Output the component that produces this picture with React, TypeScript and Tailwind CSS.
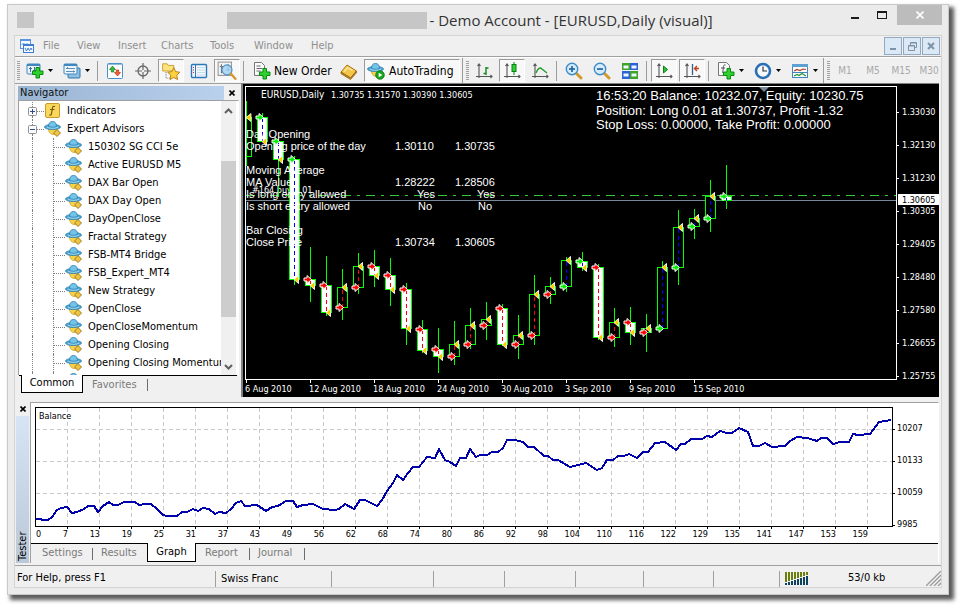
import type { ReactNode } from "react"
import { clsx } from "clsx"

type Candle = {
  x: number
  high: number
  top: number
  bottom: number
  low: number
  bull: boolean
  long: boolean
}

// [x, high, body top, body bottom, low, bullish, long position]
const rawCandles: [number, number, number, number, number, 0 | 1, 0 | 1][] = [
  [262, 113, 117, 141, 141, 0, 1],
  [278, 137, 141, 159, 197, 0, 1],
  [294, 156, 159, 279, 285, 0, 1],
  [310, 247, 279, 285, 302, 0, 0],
  [326, 256, 285, 312, 316, 0, 0],
  [342, 269, 287, 307, 320, 1, 0],
  [358, 253, 266, 287, 294, 1, 0],
  [374, 250, 266, 275, 287, 0, 0],
  [390, 258, 275, 289, 306, 0, 0],
  [406, 283, 289, 328, 345, 0, 0],
  [422, 320, 329, 350, 353, 0, 0],
  [438, 328, 349, 356, 373, 0, 0],
  [454, 321, 344, 356, 365, 1, 0],
  [470, 308, 325, 344, 349, 1, 0],
  [486, 302, 319, 325, 340, 1, 0],
  [502, 304, 308, 344, 346, 0, 0],
  [518, 315, 335, 344, 359, 1, 0],
  [534, 275, 294, 335, 345, 1, 0],
  [550, 277, 286, 294, 304, 1, 0],
  [566, 257, 260, 286, 292, 1, 1],
  [582, 252, 261, 267, 271, 0, 1],
  [598, 264, 267, 337, 340, 0, 0],
  [614, 308, 322, 337, 347, 1, 0],
  [630, 307, 322, 332, 345, 0, 0],
  [646, 314, 328, 332, 352, 1, 0],
  [662, 261, 267, 328, 330, 1, 1],
  [678, 210, 227, 267, 285, 1, 1],
  [694, 209, 218, 226, 239, 1, 1],
  [710, 180, 196, 218, 232, 1, 1],
  [726, 165, 196, 200, 209, 0, 1],
]

const candles: Candle[] = rawCandles.map(([x, high, top, bottom, low, bull, long]) => ({
  x,
  high,
  top,
  bottom,
  low,
  bull: bull === 1,
  long: long === 1,
}))

const prices = ["1.33030", "1.32130", "1.31230", "1.30305", "1.29405", "1.28480", "1.27580", "1.26655", "1.25755"]
const dates = [
  "6 Aug 2010",
  "12 Aug 2010",
  "18 Aug 2010",
  "24 Aug 2010",
  "30 Aug 2010",
  "3 Sep 2010",
  "9 Sep 2010",
  "15 Sep 2010",
]

const indicatorRows: { y: number; label: string; a?: string; b?: string; inset?: number }[] = [
  { y: 138, label: "Day Opening" },
  { y: 150, label: "Opening price of the day", a: "1.30110", b: "1.30735" },
  { y: 174, label: "Moving Average" },
  { y: 186, label: "MA Value", a: "1.28222", b: "1.28506" },
  { y: 198, label: "Is long entry allowed", a: "Yes", b: "Yes", inset: 22 },
  { y: 210, label: "Is short entry allowed", a: "No", b: "No", inset: 23 },
  { y: 234, label: "Bar Closing" },
  { y: 246, label: "Close Price", a: "1.30734", b: "1.30605" },
]

const balancePoints =
  "36,519 41,519 42,520 48,520 52,517 57,510 61,508 67,507 72,513 77,512 84,509 88,506 94,506 98,512 103,506 109,502 113,505 118,505 124,502 135,502 139,505 145,504 151,504 157,509 163,515 167,516 177,516 182,512 187,512 193,509 198,511 203,508 209,509 215,514 219,512 226,513 231,509 236,503 241,501 245,506 257,505 266,511 272,507 278,506 286,501 293,501 297,507 303,505 313,504 323,509 335,510 339,509 345,504 354,509 360,500 365,500 377,506 382,500 387,491 393,483 397,475 403,480 408,473 413,467 419,467 427,457 435,458 439,449 445,460 450,462 456,466 460,458 466,458 470,449 476,457 480,455 487,455 492,452 498,452 503,448 507,440 515,440 523,442 528,447 534,447 544,456 548,456 553,460 558,460 570,467 578,465 586,463 597,470 602,468 607,460 613,460 618,456 624,456 629,454 637,458 643,452 648,452 655,443 665,442 676,450 681,444 685,444 691,439 702,439 707,436 712,437 720,431 727,433 732,433 739,428 748,432 753,446 759,446 765,443 772,447 785,446 790,441 797,437 807,438 817,441 821,438 827,438 833,444 840,442 849,442 853,434 858,435 870,434 879,422 891,420"

const tradeLabels = [
  "7", "13", "19", "25", "31", "37", "43", "49", "56", "62", "68", "74", "80",
  "86", "92", "98", "104", "110", "116", "122", "129", "135", "141", "147", "153", "159",
]

const menus = [
  { label: "File", width: "w-[34px]" },
  { label: "View", width: "w-[41px]" },
  { label: "Insert", width: "w-[43px]" },
  { label: "Charts", width: "w-[49px]" },
  { label: "Tools", width: "w-[44px]" },
  { label: "Window", width: "w-[57px]" },
  { label: "Help", width: "w-[40px]" },
]

const experts = [
  "150302 SG CCI 5e",
  "Active EURUSD M5",
  "DAX Bar Open",
  "DAX Day Open",
  "DayOpenClose",
  "Fractal Strategy",
  "FSB-MT4 Bridge",
  "FSB_Expert_MT4",
  "New Strategy",
  "OpenClose",
  "OpenCloseMomentum",
  "Opening Closing",
  "Opening Closing Momentum",
]

/* ---------- icons ---------- */

function Icon({ children, size = 18 }: { children: ReactNode; size?: number }) {
  return (
    <svg width={size} height={size} viewBox="0 0 18 18" fill="none" className="shrink-0" aria-hidden="true">
      {children}
    </svg>
  )
}

function Plus({ x, y }: { x: number; y: number }) {
  return (
    <path
      transform={`translate(${x} ${y})`}
      d="M4 .5h3.500v3.500h3.500v3.500h-3.500v3.500h-3.500v-3.500h-3.500v-3.500h3.500z"
      fill="#2fd12f"
      stroke="#0d8a12"
    />
  )
}

function NewChartIcon() {
  return (
    <Icon>
      <rect x="1" y="2" width="13" height="10" rx="1" fill="#eaf4fc" stroke="#3f87bd" />
      <path d="M1 3h13" stroke="#3f87bd" strokeWidth="2" />
      <path d="M4.500 5v5M3 6.500h3M8.500 5v5M7 8.500h3" stroke="#3a6f9c" />
      <Plus x={6} y={5} />
    </Icon>
  )
}

function ProfilesIcon() {
  return (
    <Icon>
      <rect x="5" y="6" width="12" height="10" rx="1" fill="#8fc0e4" stroke="#2f74ab" />
      <rect x="1" y="2" width="13" height="10" rx="1" fill="#eef6fc" stroke="#3f87bd" />
      <path d="M1 3h13" stroke="#3f87bd" strokeWidth="2" />
      <path d="M3 6.500h9M3 9.500h9M4.500 5v2M10.500 8.500v2" stroke="#5c8fb8" />
    </Icon>
  )
}

function MarketWatchIcon() {
  return (
    <Icon>
      <rect x="1.500" y="1.500" width="15" height="15" rx="1" fill="#fdfdfd" stroke="#4a90c8" />
      <path d="M2 2.500h14" stroke="#8fbce0" />
      <path d="M6.500 4l3 3.500h-1.800v2.500H5.300V7.500H3.500z" fill="#35b83a" stroke="#15801b" strokeWidth=".7" />
      <path d="M11.500 14l-3-3.500h1.800V8h2.400v2.500h1.800z" fill="#f0623a" stroke="#b6300f" strokeWidth=".7" />
    </Icon>
  )
}

function CrosshairIcon() {
  return (
    <Icon>
      <circle cx="9" cy="9" r="5" stroke="#666" strokeWidth="1.300" />
      <path d="M9 1v7M9 10v7M1 9h7M10 9h7" stroke="#666" strokeWidth="1.200" />
    </Icon>
  )
}

function NavigatorIcon() {
  return (
    <Icon size={20}>
      <path d="M1.500 2.500h4l1 1.500h5v5h-10z" fill="#fbe47c" stroke="#c79a2a" strokeWidth=".8" />
      <path d="M4.500 10v6M5 15.500h4" stroke="#888" strokeDasharray="1 1" />
      <path
        d="M11.500 6l1.700 3.600 3.800.5-2.800 2.700.7 3.900-3.400-1.900-3.400 1.900.7-3.900L6 10.100l3.800-.5z"
        fill="#fbd13e"
        stroke="#b9821c"
        strokeWidth=".9"
      />
    </Icon>
  )
}

function DataWindowIcon() {
  return (
    <Icon>
      <rect x="1.500" y="2.500" width="15" height="13" rx="1" fill="#f3f9fe" stroke="#2f78b7" strokeWidth="1.400" />
      <path d="M5.500 3v12" stroke="#2f78b7" />
      <path d="M3 5.500h1M3 8h1M3 10.500h1" stroke="#d03030" />
      <path d="M7 5.500h8M7 8h8M7 10.500h8M7 13h8" stroke="#c4dcef" />
    </Icon>
  )
}

function TesterIcon() {
  return (
    <Icon size={20}>
      <rect x="1" y="1" width="12" height="12" fill="#f4f4f4" stroke="#999" />
      <path d="M4 3v8M2.500 5h3M10 3v6M8.500 8h3" stroke="#777" />
      <circle cx="9" cy="8" r="4.500" fill="#9fd0f2" fillOpacity=".8" stroke="#4b92c6" />
      <path d="M12.500 11.500l4 4.500" stroke="#d3992c" strokeWidth="2.200" strokeLinecap="round" />
    </Icon>
  )
}

function NewOrderIcon() {
  return (
    <Icon>
      <path d="M1.500.5h7l3 3v10h-10z" fill="#fafafa" stroke="#777" />
      <path d="M3.500 4h4M3.500 6.500h6M3.500 9h4" stroke="#666" />
      <Plus x={6} y={6} />
    </Icon>
  )
}

function MetaEditorIcon() {
  return (
    <Icon>
      <path d="M1 10l6-7 9.500 6-6 7z" fill="#f3c64b" stroke="#a9731a" />
      <path d="M1 10v1.700l9.500 5.800 6-6.800V9l-6 7z" fill="#c98e24" stroke="#93610f" strokeWidth=".8" />
      <path d="M4 9.500l3.500-4 5 3" stroke="#fdeba6" strokeWidth="1.300" />
    </Icon>
  )
}

function ExpertIcon({ play = false }: { play?: boolean }) {
  return (
    <Icon>
      <path d="M4.500 8.500c0 3.500 2 6 5 6s4-3 4-6z" fill="#f7d54a" stroke="#c39a25" strokeWidth=".8" />
      <ellipse cx="8.500" cy="7" rx="8" ry="2.600" fill="#4fa9d8" stroke="#2a7cab" strokeWidth=".8" />
      <path d="M4.500 6.500c0-3.500 1.600-5 4-5s4 1.500 4 5c-2 1-6 1-8 0z" fill="#74c3e8" stroke="#2a7cab" strokeWidth=".8" />
      <path d="M3 7.200c3 1.500 8 1.500 11 0" stroke="#b9e3f6" strokeWidth=".8" />
      {play ? (
        <>
          <circle cx="13" cy="13" r="4.300" fill="#17a51c" stroke="#0b7c10" strokeWidth=".8" />
          <path d="M11.700 10.700v4.600l3.700-2.300z" fill="#fff" />
        </>
      ) : (
        <path d="M13 9.500l3.500 3.500-3.500 3.500-3.500-3.500z" fill="#f0c443" stroke="#96701a" strokeWidth=".9" />
      )}
    </Icon>
  )
}

function IndicatorsIcon() {
  return (
    <Icon>
      <rect x="1.500" y="1.500" width="14" height="14" rx="1.500" fill="#f8d75a" stroke="#c79a2a" />
      <path d="M11 4.500c-2-.8-2.400.6-2.700 2.500L7.400 12c-.2 1-.8 1.300-1.900.9M6 7.500h4.500" stroke="#7a5510" strokeWidth="1.200" />
    </Icon>
  )
}

function Axes() {
  return <path d="M4 2v14M1 14.500h16M2.500 4L4 2l1.500 2M15.500 13l1.500 1.500-1.500 1.500" stroke="#555" strokeWidth="1.100" />
}

function BarsIcon() {
  return (
    <Icon>
      <Axes />
      <path d="M11 5v8M11 6h2.500M8.500 11.500H11" stroke="#128a1a" strokeWidth="1.400" />
    </Icon>
  )
}

function CandlesIcon() {
  return (
    <Icon>
      <Axes />
      <path d="M11 0v13" stroke="#0a7f12" />
      <rect x="9" y="2.500" width="4" height="7" fill="#2fcf38" stroke="#0a7f12" />
    </Icon>
  )
}

function LineIcon() {
  return (
    <Icon>
      <Axes />
      <path d="M5 11c2-5 4-6 6-4l5 4" stroke="#1c9a24" strokeWidth="1.300" />
    </Icon>
  )
}

function ZoomIcon({ plus = false }: { plus?: boolean }) {
  return (
    <Icon>
      <path d="M11 11l5 5" stroke="#d29a2c" strokeWidth="3" strokeLinecap="round" />
      <circle cx="7" cy="7" r="5.700" fill="#d6ecfb" stroke="#3d8dc8" strokeWidth="1.400" />
      <path d="M4 7h6" stroke="#2467a3" strokeWidth="1.700" />
      {plus && <path d="M7 4v6" stroke="#2467a3" strokeWidth="1.700" />}
    </Icon>
  )
}

function TileIcon() {
  return (
    <Icon>
      <path d="M1 1h8v7H1zM9 9h8v8H9z" fill="#3da52b" />
      <path d="M9 1h8v7H9zM1 9h8v8H1z" fill="#2c62d6" />
      <path d="M2.500 3.500h5v3h-5zM10.500 3.500h5v3h-5zM2.500 11.500h5v3h-5zM10.500 11.500h5v3h-5z" fill="#eef6ff" />
    </Icon>
  )
}

function AutoScrollIcon() {
  return (
    <Icon>
      <Axes />
      <path d="M8.500 4v7l4-3.500z" fill="#2bc234" stroke="#0d8316" />
    </Icon>
  )
}

function ShiftIcon() {
  return (
    <Icon>
      <Axes />
      <path d="M9.500 2v11" stroke="#2c5f92" strokeWidth="1.300" />
      <path d="M16 6.500h-4M14 4l-2.500 2.500L14 9" stroke="#c2411b" strokeWidth="1.400" />
    </Icon>
  )
}

function AddIndicatorIcon() {
  return (
    <Icon>
      <path d="M1.500.5h8l3 3v10h-11z" fill="#fafafa" stroke="#777" />
      <path d="M8.500 3c-2-.5-2 1-2.200 3l-.6 5M4 6h4" stroke="#555" />
      <Plus x={6} y={6} />
    </Icon>
  )
}

function ClockIcon() {
  return (
    <Icon>
      <circle cx="9" cy="9" r="7" fill="#f4f9fd" stroke="#2a6fb5" strokeWidth="2.600" />
      <path d="M9 4.500V9h4" stroke="#333" strokeWidth="1.200" />
    </Icon>
  )
}

function TemplateIcon() {
  return (
    <Icon>
      <rect x="1.500" y="2.500" width="15" height="13" fill="#fbfdff" stroke="#3f87bd" />
      <path d="M1 3.500h16" stroke="#5ea0d4" strokeWidth="3" />
      <path d="M3 9l3-1.500 3 1 3-1.500 3 .5" stroke="#b23a1e" strokeWidth="1.200" />
      <path d="M2 10.500h14" stroke="#3f87bd" />
      <path d="M3 14l3-1.500 2 1 3-2 4 2.500" stroke="#25962c" strokeWidth="1.200" />
    </Icon>
  )
}

function Caret() {
  return (
    <svg width="5" height="3" viewBox="0 0 5 3" className="shrink-0" aria-hidden="true">
      <path d="M0 0h5L2.500 3z" fill="#000" />
    </svg>
  )
}

/* ---------- toolbar ---------- */

const pressedStyle = "border border-t-[#9a9a9a] border-l-[#9a9a9a] border-r-white border-b-white bg-[#f8f8f8]"

function Tool({ label, pressed, children }: { label: string; pressed?: boolean; children: ReactNode }) {
  return (
    <button
      type="button"
      aria-label={label}
      aria-pressed={pressed}
      className={clsx("mx-px flex h-[23px] w-[26px] shrink-0 items-center justify-center", pressed && pressedStyle)}
    >
      {children}
    </button>
  )
}

function MenuTool({ label, children }: { label: string; children: ReactNode }) {
  return (
    <button type="button" aria-label={label} className="flex h-[23px] w-[37px] shrink-0 items-center justify-center gap-1">
      {children}
      <Caret />
    </button>
  )
}

function Separator() {
  return <span className="mr-[3px] ml-0.5 h-5 w-px shrink-0 bg-[#9c9c9c]" />
}

function Grip() {
  return (
    <span className="mr-px ml-0.5 h-5 w-[3px] shrink-0 bg-[repeating-linear-gradient(to_bottom,#a0a0a0_0_1px,transparent_1px_2px)]" />
  )
}

function Toolbar() {
  return (
    <div className="flex h-[26px] items-center overflow-hidden border-t border-white bg-[#f0f0f0] text-[12px]">
      <Grip />
      <MenuTool label="New chart"><NewChartIcon /></MenuTool>
      <MenuTool label="Profiles"><ProfilesIcon /></MenuTool>
      <Separator />
      <Tool label="Market Watch"><MarketWatchIcon /></Tool>
      <Tool label="Crosshair"><CrosshairIcon /></Tool>
      <Tool label="Navigator" pressed><NavigatorIcon /></Tool>
      <Tool label="Data Window"><DataWindowIcon /></Tool>
      <Tool label="Strategy Tester" pressed><TesterIcon /></Tool>
      <Separator />
      <button type="button" className="flex h-[23px] w-[88px] shrink-0 items-center gap-[3px] pl-1.5 whitespace-nowrap">
        <NewOrderIcon />
        New Order
      </button>
      <Tool label="MetaEditor"><MetaEditorIcon /></Tool>
      <button
        type="button"
        aria-pressed="true"
        className={clsx("ml-px flex h-[23px] w-[96px] shrink-0 items-center gap-1 pl-0.5 whitespace-nowrap", pressedStyle)}
      >
        <ExpertIcon play />
        AutoTrading
      </button>
      <span className="mr-px ml-0.5 h-full w-px shrink-0 bg-[#9c9c9c]" />
      <Grip />
      <Tool label="Bar chart"><BarsIcon /></Tool>
      <Tool label="Candlesticks" pressed><CandlesIcon /></Tool>
      <Tool label="Line chart"><LineIcon /></Tool>
      <Separator />
      <Tool label="Zoom in"><ZoomIcon plus /></Tool>
      <Tool label="Zoom out"><ZoomIcon /></Tool>
      <Tool label="Tile windows"><TileIcon /></Tool>
      <Separator />
      <Tool label="Auto scroll" pressed><AutoScrollIcon /></Tool>
      <Tool label="Chart shift" pressed><ShiftIcon /></Tool>
      <Separator />
      <MenuTool label="Indicators list"><AddIndicatorIcon /></MenuTool>
      <MenuTool label="Periods"><ClockIcon /></MenuTool>
      <MenuTool label="Templates"><TemplateIcon /></MenuTool>
      <span className="mr-px h-full w-px shrink-0 bg-[#9c9c9c]" />
      <Grip />
      {["M1", "M5", "M15", "M30"].map((period) => (
        <button key={period} type="button" disabled className="w-7 shrink-0 text-[10px] text-[#a8a8a8]">
          {period}
        </button>
      ))}
    </div>
  )
}

/* ---------- title and menu ---------- */

function TitleBar() {
  return (
    <header className="flex h-[30px] items-start">
      <span className="mt-[7px] ml-[9px] h-4 w-[17px] bg-[#c6c6c6]" />
      <span className="flex-[3]" />
      <span className="mt-[7px] h-[17px] w-[200px] bg-[#c6c6c6]" />
      <h1 className="ml-[3px] font-['Open_Sans',sans-serif] text-[15px] leading-[30px] whitespace-nowrap text-[#333]">
        - Demo Account - [EURUSD,Daily (visual)]
      </h1>
      <span className="flex-[2]" />
      <div className="flex items-start">
        <button type="button" aria-label="Minimize" className="h-5 w-7 pt-1.5 pl-2.5">
          <span className="block h-0.5 w-2 bg-[#1a1a1a]" />
        </button>
        <button type="button" aria-label="Maximize" className="h-5 w-7 pl-2">
          <span className="block h-2 w-2.5 border border-t-2 border-[#1a1a1a]" />
        </button>
        <button
          type="button"
          aria-label="Close"
          className="mr-1.5 flex h-5 w-[45px] items-center justify-center bg-[#bcbcbc]"
        >
          <svg width="8" height="8" viewBox="0 0 8 8" stroke="#fff" strokeWidth="1.600">
            <path d="M.5.5l7 7M7.500.5l-7 7" />
          </svg>
        </button>
      </div>
    </header>
  )
}

function MenuBar() {
  const box = "flex h-[18px] w-[18px] items-center justify-center border border-[#93a9bf] bg-[#dbe8f5]"
  return (
    <nav className="flex h-[21px] items-center border-b border-[#a0a0a0] bg-[#f0f0f0] text-[11px] text-[#8f8f8f]">
      <svg width="14" height="14" viewBox="0 0 14 14" fill="none" className="mr-[9px] ml-[5px]" aria-hidden="true">
        <rect x=".5" y=".5" width="10" height="9" fill="#f4f9ff" stroke="#5b95e0" />
        <path d="M0 1.500h11" stroke="#5b95e0" />
        <path d="M1.500 6l2-2 2 2 2-2" stroke="#5b95e0" />
        <rect x="3.500" y="5.500" width="10" height="8" fill="#f4f9ff" stroke="#3f7dd0" />
        <path d="M3 6.500h11M5 9l1.500 3L8 9l1.500 2.500L11 9l1 2" stroke="#3f7dd0" />
      </svg>
      {menus.map((menu) => (
        <button key={menu.label} type="button" className={clsx("text-left", menu.width)}>
          {menu.label}
        </button>
      ))}
      <div className="mr-px ml-auto flex gap-px">
        <button type="button" aria-label="Minimize chart" className={box}>
          <span className="mt-1.5 block h-0.5 w-1.5 bg-[#7f93a8]" />
        </button>
        <button type="button" aria-label="Restore chart" className={box}>
          <svg width="9" height="9" viewBox="0 0 9 9" fill="none" stroke="#7f93a8">
            <path d="M2.500 3V.5h6v5H6.500M2 1h7M.5 3.500h6v5h-6zM0 4h7" />
          </svg>
        </button>
        <button type="button" aria-label="Close chart" className={box}>
          <svg width="8" height="8" viewBox="0 0 8 8" stroke="#7f93a8" strokeWidth="2">
            <path d="M1 1l6 6M7 1L1 7" />
          </svg>
        </button>
      </div>
    </nav>
  )
}

/* ---------- navigator ---------- */

function SmallClose() {
  return (
    <svg width="6" height="6" viewBox="0 0 6 6" stroke="#000" strokeWidth="1.600" aria-hidden="true">
      <path d="M.5.5l5 5M5.500.5l-5 5" />
    </svg>
  )
}

function RootRow({ label, open, children }: { label: string; open?: boolean; children: ReactNode }) {
  return (
    <div className="flex h-[18px] items-center">
      <button
        type="button"
        aria-label={`Toggle ${label}`}
        className="ml-[9px] flex h-full w-[9px] shrink-0 flex-col items-center"
      >
        <span className="w-px flex-1 border-l border-dotted border-[#808080]" />
        <svg width="9" height="9" viewBox="0 0 9 9" fill="none">
          <rect x=".5" y=".5" width="8" height="8" rx="1" fill="#fafafa" stroke="#919191" />
          <path d={open ? "M2 4.500h5" : "M2 4.500h5M4.500 2v5"} stroke="#2f4c9b" />
        </svg>
        <span className="w-px flex-1 border-l border-dotted border-[#808080]" />
      </button>
      <span className="w-[7px] border-t border-dotted border-[#808080]" />
      {children}
      <span className="ml-[5px]">{label}</span>
    </div>
  )
}

function ExpertRow({ label }: { label: string }) {
  return (
    <li className="flex h-[18px] items-center whitespace-nowrap">
      <span className="ml-[13px] h-full w-[21px] shrink-0 border-l border-dotted border-[#808080]" />
      <span className="h-full w-3 shrink-0 border-l border-dotted border-[#808080]">
        <span className="block h-2.5 border-b border-dotted border-[#808080]" />
      </span>
      <ExpertIcon />
      <span className="ml-[5px]">{label}</span>
    </li>
  )
}

function Navigator() {
  return (
    <aside className="w-[226px] shrink-0 border-t border-[#a0a0a0] pt-0.5 pl-[3px] text-[11px]">
      <div className="flex h-[14px] items-center">
        <h2 className="h-[14px] w-[206px] bg-linear-to-r from-[#99b4d1] to-[#bad1ed] pl-0.5 leading-[13px] text-[#111]">Navigator</h2>
        <button type="button" aria-label="Close navigator" className="ml-[5px]">
          <SmallClose />
        </button>
      </div>
      <div className="flex h-[275px] w-[221px] border border-b-0 border-[#a0a0a0] border-r-white bg-white">
        <div className="min-w-0 flex-1 overflow-hidden pt-px">
          <RootRow label="Indicators"><IndicatorsIcon /></RootRow>
          <RootRow label="Expert Advisors" open><ExpertIcon /></RootRow>
          <ul>
            {experts.map((name) => (
              <ExpertRow key={name} label={name} />
            ))}
            <ExpertRow label="" />
          </ul>
        </div>
        <div className="mr-0.5 flex w-[15px] shrink-0 flex-col items-center bg-[#f0f0f0]">
          <svg width="9" height="6" viewBox="0 0 9 6" fill="none" stroke="#606060" strokeWidth="2" className="mt-[7px]">
            <path d="M1 5l3.500-3.500L8 5" />
          </svg>
          <div className="mt-[47px] h-[156px] w-full bg-[#cdcdcd]" />
          <svg width="9" height="6" viewBox="0 0 9 6" fill="none" stroke="#606060" strokeWidth="2" className="mt-auto mb-[5px]">
            <path d="M1 1l3.500 3.500L8 1" />
          </svg>
        </div>
      </div>
      <div className="ml-px flex h-[21px] w-[218px] items-start border-t border-black pl-0.5">
        <button type="button" className="-mt-px h-[18px] w-[62px] border border-t-0 border-black bg-white">
          Common
        </button>
        <button type="button" className="ml-[9px] h-[18px] text-[#7a7a7a]">
          Favorites
        </button>
        <span className="mt-[3px] ml-[10px] h-3 w-px bg-[#6d6d6d]" />
      </div>
    </aside>
  )
}

/* ---------- price chart ---------- */

function CandleShape({ candle }: { candle: Candle }) {
  const { x, high, top, bottom, low, bull, long } = candle
  const openY = (bull ? bottom : top) + 0.5
  const closeY = (bull ? top : bottom) + 0.5
  return (
    <g>
      <g shapeRendering="crispEdges">
        <rect x={x} y={high} width="1" height={low - high} fill="#00ff00" />
        <rect x={x - 5} y={top} width="11" height={bottom - top + 1} fill="#00ff00" />
        <rect x={x - 4} y={top + 1} width="9" height={bottom - top - 1} fill={bull ? "#000" : "#fff"} />
        <path d={`M${x + 0.5} ${openY}V${closeY}`} stroke={long ? "#0000ff" : "#ff0000"} strokeDasharray="4 3" />
      </g>
      {x !== 726 && (
        <path d={`M${x} ${closeY}l4.500-4v8z`} fill="#ffcc00" stroke="#fff" strokeWidth=".9" />
      )}
      <path
        d={`M${x - 6} ${openY - 1.5}h3v-2.500l4.500 4-4.500 4v-2.500h-3z`}
        fill={long ? "#00f000" : "#ff0000"}
        stroke="#fff"
        strokeWidth="1"
      />
    </g>
  )
}

function PriceChart() {
  return (
    <main className="mr-0.5 min-w-0 flex-1 border-t border-l-2 border-[#808080] bg-black">
      <svg viewBox="243 84 696 313" className="block w-full" role="img" aria-label="EURUSD daily chart">
        <g fill="none" stroke="#fff" shapeRendering="crispEdges">
          <rect x="245.500" y="86.500" width="651" height="293" />
          {prices.map((price, i) => (
            <path key={price} d={`M897 ${112.5 + i * 33}h2`} />
          ))}
          {dates.map((date, i) => (
            <path key={date} d={`M${246.5 + i * 64} 380v3`} />
          ))}
        </g>
        <path d="M246 195.500H896" stroke="#32cd32" strokeDasharray="9 6 3 6" shapeRendering="crispEdges" />
        <path d="M246 200.500H896" stroke="#778899" shapeRendering="crispEdges" />
        <path d="M759 87h10l-5 5z" fill="#778899" />

        <g className="font-['DejaVu_Sans_Condensed','Liberation_Sans',sans-serif]" fill="#fff" fontSize="9">
          <text x="261" y="98" fontSize="10">EURUSD,Daily</text>
          <text x="331" y="98">1.30735 1.31570 1.30390 1.30605</text>
          <text x="252" y="193">#164 buy 0.01</text>
          {prices.map((price, i) => (
            <text key={price} x="902" y={115 + i * 33}>{price}</text>
          ))}
          {dates.map((date, i) => (
            <text key={date} x={245 + i * 64} y="392">{date}</text>
          ))}
          <rect x="898" y="194" width="41" height="11" />
          <text x="902" y="203" fill="#000">1.30605</text>
        </g>

        <g shapeRendering="crispEdges">
          <path d="M246.500 101V166M246 117.500h5.500v39H246" fill="none" stroke="#00ff00" />
        </g>
        <path d="M246 117.500l5-4v8z" fill="#ffcc00" stroke="#fff" strokeWidth=".8" />
        {candles.map((candle) => (
          <CandleShape key={candle.x} candle={candle} />
        ))}

        <g className="font-['Liberation_Sans',Arial,sans-serif]" fill="#fff" fontSize="11">
          {indicatorRows.map(({ y, label, a, b, inset = 0 }) => (
            <g key={label}>
              <text x="246" y={y}>{label}</text>
              <text x={395 + inset} y={y}>{a}</text>
              <text x={455 + inset} y={y}>{b}</text>
            </g>
          ))}
          <g fontSize="13">
            <text x="596" y="100">16:53:20 Balance: 10232.07, Equity: 10230.75</text>
            <text x="596" y="115">Position: Long 0.01 at 1.30737, Profit -1.32</text>
            <text x="596" y="129">Stop Loss: 0.00000, Take Profit: 0.00000</text>
          </g>
        </g>
      </svg>
    </main>
  )
}

/* ---------- tester ---------- */

function BalanceGraph() {
  return (
    <svg viewBox="31 403 907 140" className="block w-full bg-white" role="img" aria-label="Balance graph">
      <g stroke="#c8c8c8" strokeDasharray="4 3" shapeRendering="crispEdges">
        {tradeLabels.map((label, i) => (
          <path key={label} d={`M${67.5 + i * 32} 408V526`} />
        ))}
        {[429, 461, 493].map((y) => (
          <path key={y} d={`M36 ${y + 0.5}H892`} />
        ))}
      </g>
      <rect x="35.500" y="407.500" width="857" height="119" fill="none" stroke="#000" shapeRendering="crispEdges" />
      <path
        d="M893 429.500h2M893 461.500h2M893 493.500h2M893 525.500h2"
        stroke="#000"
        shapeRendering="crispEdges"
      />
      <polyline points={balancePoints} fill="none" stroke="#0000aa" strokeWidth="2" shapeRendering="crispEdges" />
      <g fontSize="9" fill="#000">
        <text x="39" y="419">Balance</text>
        <text x="36" y="537">0</text>
        {tradeLabels.map((label, i) => (
          <g key={label}>
            <path d={`M${67.5 + i * 32} 527v2`} stroke="#000" shapeRendering="crispEdges" />
            <text x={68 + i * 32} y="537" textAnchor="end">{label}</text>
          </g>
        ))}
        <text x="897" y="431">10207</text>
        <text x="897" y="463">10133</text>
        <text x="897" y="495">10059</text>
        <text x="897" y="527">9985</text>
      </g>
    </svg>
  )
}

function TesterTab({ label, width }: { label: string; width: string }) {
  return (
    <button type="button" className={clsx("h-[19px] shrink-0 text-left text-[#7a7a7a]", width)}>
      {label}
    </button>
  )
}

function TabDivider() {
  return <span className="mt-1 h-3 w-px shrink-0 bg-[#6d6d6d]" />
}

function Tester() {
  return (
    <section className="mt-[5px] flex pr-0.5 text-[11px]">
      <div className="flex w-[15px] shrink-0 flex-col items-center">
        <button type="button" aria-label="Close tester" className="flex h-[14px] items-center">
          <SmallClose />
        </button>
        <h2 className="w-[13px] flex-1 rotate-180 bg-linear-to-t from-[#d6e4f3] to-[#bac8d8] pt-0.5 leading-[13px] [writing-mode:vertical-rl]">
          Tester
        </h2>
      </div>
      <div className="min-w-0 flex-1 border-t border-r border-l border-[#a0a0a0] border-r-white">
        <BalanceGraph />
        <div className="flex h-5 items-start border-t border-black pl-[11px]">
          <TesterTab label="Settings" width="w-[50px]" />
          <TabDivider />
          <span className="w-2" />
          <TesterTab label="Results" width="w-[46px]" />
          <button type="button" className="-mt-px h-[19px] w-[49px] border border-t-0 border-black bg-white">
            Graph
          </button>
          <span className="w-[9px]" />
          <TesterTab label="Report" width="w-11" />
          <TabDivider />
          <span className="w-2" />
          <TesterTab label="Journal" width="w-[46px]" />
          <TabDivider />
        </div>
      </div>
    </section>
  )
}

/* ---------- status bar ---------- */

const bars = [0, 1, 2, 3, 4, 5, 6, 7]

function StatusBar() {
  const cell = "h-4 shrink-0 border-l border-[#a0a0a0]"
  return (
    <footer className="mt-0.5 flex h-[22px] items-center border-t border-[#a0a0a0] pt-1 text-[11px]">
      <span className="min-w-0 flex-1 pl-0.5">For Help, press F1</span>
      <span className={clsx(cell, "w-[116px] pl-[5px]")}>Swiss Franc</span>
      <span className={clsx(cell, "w-[102px]")} />
      <span className={clsx(cell, "w-[71px]")} />
      <span className={clsx(cell, "w-[71px]")} />
      <span className={clsx(cell, "w-[68px]")} />
      <span className={clsx(cell, "w-[70px]")} />
      <span className={clsx(cell, "w-[66px]")} />
      <span className={clsx(cell, "flex w-[162px] items-center pl-[5px]")}>
        <svg width="24" height="13" viewBox="0 0 24 13" shapeRendering="crispEdges" aria-hidden="true">
          {bars.map((i) => (
            <g key={i}>
              <rect x={i * 3} y="0" width="2" height={10 - i} fill="#6b7f10" />
              <rect x={i * 3} y={11 - i} width="2" height={2 + i} fill="#0f4260" />
            </g>
          ))}
        </svg>
        <span className="ml-[39px]">53/0 kb</span>
        <svg width="15" height="15" viewBox="0 0 15 15" stroke="#9a9a9a" strokeWidth="1.300" className="ml-auto" aria-hidden="true">
          <path d="M0 15L15 0M4 15L15 4M8 15l7-7M12 15l3-3" />
        </svg>
      </span>
    </footer>
  )
}

export default function App() {
  return (
    <div className="min-h-screen bg-white pt-1 pr-[21px] pl-[7px] font-['DejaVu_Sans_Condensed','Liberation_Sans',sans-serif] text-black">
      <div className="border border-[#c8c8c8] bg-[#ebebeb] shadow-[4px_4px_4px_1px_rgba(0,0,0,0.65)]">
        <TitleBar />
        <div className="mx-1.5 mb-1.5 border border-[#d4d4d4] bg-[#f0f0f0]">
          <MenuBar />
          <Toolbar />
          <div className="flex">
            <Navigator />
            <PriceChart />
          </div>
          <Tester />
          <StatusBar />
        </div>
      </div>
    </div>
  )
}
